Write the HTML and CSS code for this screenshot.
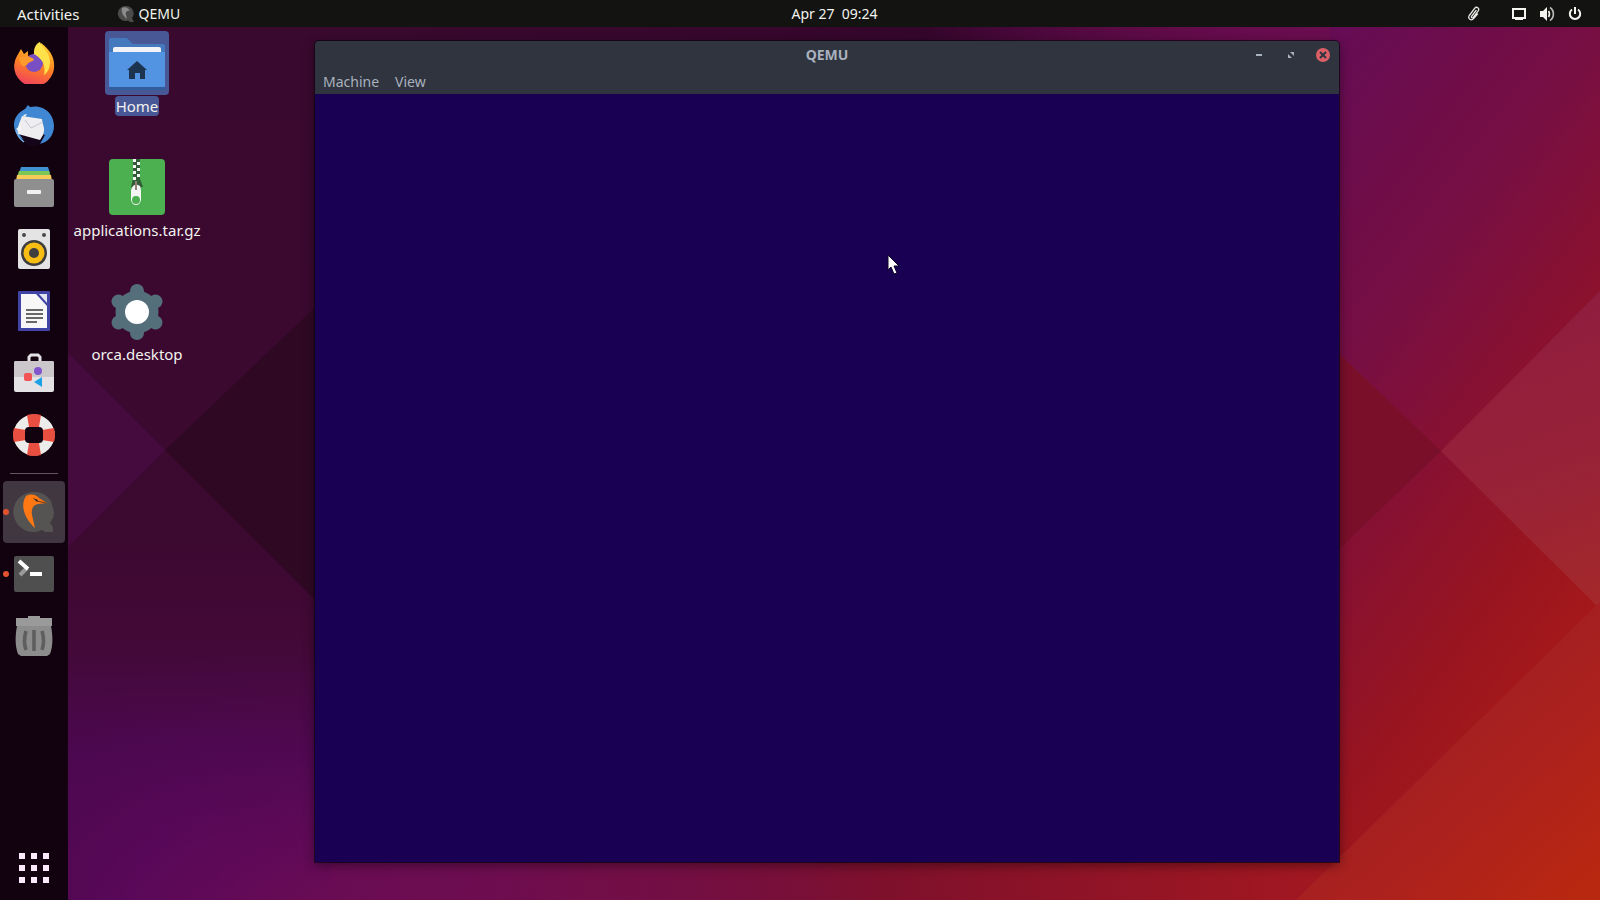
FILE: index.html
```
<!DOCTYPE html>
<html lang="en">
<head>
<meta charset="utf-8">
<title>Desktop</title>
<link rel="stylesheet" href="styles.css">
</head>
<body>
<svg class="wallpaper" viewBox="0 0 1600 900" preserveAspectRatio="none" aria-hidden="true">
  <defs>
    <linearGradient id="base" gradientUnits="userSpaceOnUse" x1="0" y1="0" x2="1600" y2="900">
      <stop offset="0" stop-color="#39092e"/><stop offset=".15" stop-color="#3a092f"/><stop offset=".22" stop-color="#48084a"/><stop offset=".3" stop-color="#5a0859"/>
      <stop offset=".4" stop-color="#6a0c54"/><stop offset=".52" stop-color="#700e4c"/><stop offset=".65" stop-color="#6a0d50"/><stop offset=".74" stop-color="#7a0f42"/>
      <stop offset=".8" stop-color="#88112f"/><stop offset=".88" stop-color="#9a151f"/><stop offset="1" stop-color="#b62410"/>
    </linearGradient>
    <linearGradient id="right" gradientUnits="userSpaceOnUse" x1="1340" y1="30" x2="1925" y2="463">
      <stop offset="0" stop-color="#660c55"/><stop offset=".15" stop-color="#6e0d4a"/><stop offset=".3" stop-color="#780f42"/><stop offset=".46" stop-color="#881131"/><stop offset=".64" stop-color="#99151f"/><stop offset=".75" stop-color="#a4181a"/><stop offset="1" stop-color="#b62410"/>
    </linearGradient>
    <linearGradient id="left" x1="0" y1="0" x2="0" y2="1">
      <stop offset="0" stop-color="#3a092e"/><stop offset=".6" stop-color="#3c0931"/><stop offset=".72" stop-color="#430938"/><stop offset=".84" stop-color="#4c0850" stop-opacity=".8"/><stop offset="1" stop-color="#5a085c" stop-opacity="0"/>
    </linearGradient>
    <linearGradient id="top" x1="0" y1="0" x2="1" y2="0">
      <stop offset="0" stop-color="#3a092e"/><stop offset=".6" stop-color="#35062c"/><stop offset="1" stop-color="#5c0850" stop-opacity="0"/>
    </linearGradient>
    <linearGradient id="bottom" x1="0" y1="0" x2="1" y2="0">
      <stop offset="0" stop-color="#750e42" stop-opacity="0"/><stop offset=".45" stop-color="#7e102c"/><stop offset="1" stop-color="#a41820"/>
    </linearGradient>
    <linearGradient id="diamond" gradientUnits="userSpaceOnUse" x1="1500" y1="330" x2="1600" y2="600">
      <stop offset="0" stop-color="#901d3e"/><stop offset=".5" stop-color="#972238"/><stop offset="1" stop-color="#a4282a"/>
    </linearGradient>
    <linearGradient id="corner" gradientUnits="userSpaceOnUse" x1="1450" y1="720" x2="1590" y2="880">
      <stop offset="0" stop-color="#a41f23"/><stop offset=".5" stop-color="#ae221b"/><stop offset="1" stop-color="#b82710"/>
    </linearGradient>
  </defs>
  <path fill="url(#base)" d="M0 0H1600V900H0z"/>
  <path fill="url(#right)" d="M1330 0H1600V900H1330z"/>
  <path fill="url(#left)" d="M0 0H330V900H0z"/>
  <path fill="url(#top)" d="M330 0H1330V60H330z"/>
  <path fill="url(#bottom)" d="M500 850H1340V900H500z"/>
  <path fill="#450a3e" d="M0 285L165 450L0 615z"/>
  <path fill="#2f0924" d="M165 450L330 293V615z"/>
  <path fill="#7a0f2a" d="M1330 345L1441 451L1330 558z"/>
  <path fill="url(#diamond)" d="M1600 291V609L1441 451z"/>
  <path fill="url(#corner)" d="M1600 602L1296 900H1600z"/>
</svg>

<header class="topbar">
  <div class="topbar-left">
    <button class="bar-button activities">Activities</button>
    <button class="bar-button app-menu">
      <svg width="18" height="18" viewBox="0 0 18 18"><path fill="#4b4b4b" d="M8 1a7.500 7.500 0 1 0 3 14.500l2 1.500h4l-2-4a7.500 7.500 0 0 0-7-12z"/><path fill="#8c8c8c" d="M5 3c3-2 6 0 8 3-3-1-5 1-4 4l1 4C6 11 4 7 5 3z"/></svg>
      <span>QEMU</span>
    </button>
  </div>
  <button class="bar-button clock">Apr 27&nbsp; 09:24</button>
  <div class="topbar-right">
    <button class="bar-button tray" aria-label="Clipboard">
      <svg width="16" height="16" viewBox="0 0 16 16" fill="none" stroke="#e8e8e4" stroke-width="1.300" stroke-linecap="round"><path d="M10 4.500L5.700 10.200c-.8 1.200.6 2.300 1.500 1.200l5-6.600c1.700-2.500-1.600-4.800-3.400-2.600L3.300 9.500c-2 3 2 6 4.300 3.200L11.500 8"/></svg>
    </button>
    <button class="bar-button system" aria-label="System menu">
      <svg width="16" height="16" viewBox="0 0 16 16"><path fill="#f4f4f0" fill-rule="evenodd" d="M1 2h14v11h-3v1H4v-1H1zM3 4v7h10V4z"/></svg>
      <svg width="16" height="16" viewBox="0 0 16 16"><path fill="#f4f4f0" d="M1 5h3l4-4v14l-4-4H1z"/><path fill="none" stroke="#f4f4f0" stroke-width="1.600" d="M9.500 5q2 3 0 6"/><path fill="none" stroke="#b9b9b5" stroke-width="1.700" d="M11 1.500c4.500 3 4.500 10 0 13"/></svg>
      <svg width="16" height="16" viewBox="0 0 16 16" fill="none" stroke="#f4f4f0" stroke-width="2"><path d="M5 3.500a5.200 5.200 0 1 0 6 0M8 1v7"/></svg>
    </button>
  </div>
</header>

<div class="workspace">
  <nav class="dock" aria-label="Dock">
    <button class="dock-item" aria-label="Firefox"><svg viewBox="0 0 40 42">
      <defs><linearGradient id="fox" x1=".7" y1="0" x2=".4" y2="1"><stop offset="0" stop-color="#ffcf35"/><stop offset=".5" stop-color="#ff8420"/><stop offset="1" stop-color="#f0405e"/></linearGradient></defs>
      <path fill="url(#fox)" d="M3 14L7 7l3 5 4-3v5l10-3 3-10c8 6 13 13 13 21A20 20 0 1 1 3 14z"/>
      <circle cx="20" cy="21" r="9" fill="#7b4fc4"/><path fill="#ffe14a" d="M20 10c0-5 3-9 6-10 2 6 10 10 10 20 0 7-3 11-6 13 2-9-1-16-10-21z"/>
      <path fill="#ff9a2c" d="M5 15l9-1c2 2 5 1 6 4-3 2-6 2-7 5-4 3-7 0-8-8z"/>
    </svg></button>
    <button class="dock-item" aria-label="Thunderbird"><svg viewBox="0 0 40 42">
      <path fill="#3f87d2" d="M11 5l3-4 2 2C30 0 40 10 40 22c0 9-6 17-15 18l-8-2C7 37 0 30 0 21 0 13 5 8 11 5z"/>
      <path fill="#14051a" d="M4 28l9 13c5 1 9 1 13-1l5-9-20-7z"/><path fill="#eeeef0" d="M8 12l20 3c0 5 4 9 1 16l-3 5L4 30c-2-5 2-12 4-18z"/>
      <path fill="none" stroke="#c3c7ce" d="M11 16l6 8 12-6"/><path fill="#f4f6fa" d="M9 11l4-1-2 3zM2 25l5-4v7z"/><path fill="none" stroke="#74b2ef" stroke-width="1.500" d="M2 26c1 6 4 9 8 12"/>
    </svg></button>
    <button class="dock-item" aria-label="Files"><svg viewBox="0 0 40 42">
      <path fill="#4190cf" d="M7 1h27l2 6H5z"/><path fill="#7cc655" d="M5 5h30l2 6H3z"/><path fill="#f6cb58" d="M3 9h34l1 6H2z"/><rect y="13" width="40" height="28" rx="2" fill="#8f8f8f"/><rect x="13" y="24" width="14" height="4" rx="1" fill="#f2f2f2"/>
    </svg></button>
    <button class="dock-item" aria-label="Rhythmbox"><svg viewBox="0 0 40 42">
      <rect x="4" y="1" width="32" height="40" rx="2" fill="#e4e4e4"/><circle cx="10" cy="7" r="2" fill="#4a4a4a"/><circle cx="30" cy="7" r="2" fill="#4a4a4a"/><circle cx="20" cy="25" r="13" fill="#3e3e3e"/><circle cx="20" cy="25" r="10.500" fill="#f8bd13"/><circle cx="20" cy="25" r="5" fill="#3e3e3e"/>
    </svg></button>
    <button class="dock-item" aria-label="LibreOffice Writer"><svg viewBox="0 0 40 42">
      <rect x="4" y="1" width="32" height="40" rx="1" fill="#4044a4"/><path fill="#f7f7f7" d="M7 4h15l11 12v22H7z"/><path fill="#e2e6f0" d="M25 4h8v9z"/><path stroke="#686868" stroke-width="2" d="M12 20h17M12 24h17M12 28h17M12 32h11"/>
    </svg></button>
    <button class="dock-item" aria-label="Ubuntu Software"><svg viewBox="0 0 40 42">
      <path fill="none" stroke="#e4e2e4" stroke-width="3" d="M15 10V5l2-2h7l2 2v5"/><rect y="9" width="40" height="31" rx="2" fill="#e4e2e4"/><path fill="#cbc7cb" d="M0 11q0-2 2-2h36q2 0 2 2v14H0z"/><circle cx="24" cy="19" r="4" fill="#8255cf"/><rect x="10" y="21" width="8" height="8" rx="2" fill="#f25455"/><path fill="#1ca2e4" d="M20 30l8-5v10z"/>
    </svg></button>
    <button class="dock-item" aria-label="Help"><svg viewBox="0 0 42 42">
      <circle cx="21" cy="21" r="14.500" fill="none" stroke="#ececea" stroke-width="12"/><path fill="#e94f40" d="M14 1q7-2 14 0l-2 12H16zM14 41q7 2 14 0l-2-12H16zM1 14q-2 7 0 14l12-2V16zM41 14q2 7 0 14l-12-2V16z"/><rect x="12" y="13" width="18" height="16" rx="4" fill="#12010f"/>
    </svg></button>
    <hr class="dock-separator">
    <button class="dock-item running active" aria-label="QEMU"><svg viewBox="0 0 40 42">
      <path fill="#555452" d="M20 1a20 20 0 1 0 8 38l3 2h8v-5l-3-4 3-5 1-6-3-11A20 20 0 0 0 20 1z"/><path fill="#ff7813" d="M12 5c6-3 10-1 13 2l8 5-9 1c-5 1-7 5-6 11l3 13C10 27 6 14 12 5z"/><path fill="#2b2421" d="M19 7l5 2-1 2z"/><path stroke="#6b391a" d="M23 10l9 2"/>
    </svg></button>
    <button class="dock-item running" aria-label="Terminal"><svg viewBox="0 0 40 42">
      <rect y="3" width="40" height="36" rx="2" fill="#504f50"/><path fill="none" stroke="#9a9a9a" stroke-width="4" d="M13 15l-7 7"/><path fill="none" stroke="#fff" stroke-width="4" d="M5 8l9 8M16 21h12"/>
    </svg></button>
    <button class="dock-item" aria-label="Trash"><svg viewBox="0 0 40 42">
      <path fill="#9a9a9a" d="M14 1h12v2h12v8H2V3h12z"/><path fill="#8c8c8c" d="M3 11h34c2 10 2 20-1 28l-3 2H7l-3-2C1 31 1 21 3 11z"/><path fill="none" stroke="#5e5e5e" stroke-width="3.600" d="M12 16q-3 10 0 19M20 15v21M28 16q3 10 0 19"/>
    </svg></button>
    <button class="dock-item apps" aria-label="Show Applications"><svg viewBox="0 0 42 42"><path fill="#fce9fb" d="M6 6h6v6H6zM18 6h6v6h-6zM30 6h6v6h-6zM6 18h6v6H6zM18 18h6v6h-6zM30 18h6v6h-6zM6 30h6v6H6zM18 30h6v6h-6zM30 30h6v6h-6z"/></svg></button>
  </nav>

  <main class="desktop">
    <div class="shortcuts">
      <button class="shortcut selected">
        <span class="shortcut-icon"><svg viewBox="0 0 64 64"><path fill="#4579bd" d="M4 9q0-2 2-2h14c5 0 5 6 9 6h29q2 0 2 2v40H4z"/><path fill="#f1f3f6" d="M8 18q0-2 2-2h44q2 0 2 2v8H8z"/><path fill="#5294e2" d="M4 21h56v34q0 2-2 2H6q-2 0-2-2z"/><path fill="#325d9c" d="M4 56h56v1q0 2-2 2H6q-2 0-2-2z"/><path fill="#1d3450" d="M32 30l10 9h-2v9h-5v-6h-5v6h-6v-9h-2z"/></svg></span>
        <span class="shortcut-name">Home</span>
      </button>
      <button class="shortcut">
        <span class="shortcut-icon"><svg viewBox="0 0 64 64"><rect x="4" y="4" width="56" height="56" rx="4" fill="#4caf50"/><path fill="#315c37" d="M28 4h7v20l3 8H26l2-8z"/><path fill="#f5f7f5" d="M28 4h3v3h-3zM32 7h3v3h-3zM28 10h3v3h-3zM32 13h3v3h-3zM28 16h3v3h-3zM32 19h3v3h-3zM28 22h3v3h-3z"/><path fill="#f5f5f5" d="M28 31q3-3 7 0l1 4v10q-1 5-5 5t-5-5V35z"/><path stroke="#938078" stroke-width="2" d="M31 26v9"/><circle cx="31" cy="45" r="4" fill="#4caf50"/></svg></span>
        <span class="shortcut-name">applications.tar.gz</span>
      </button>
      <button class="shortcut">
        <span class="shortcut-icon"><svg viewBox="0 0 64 64"><g stroke="#546e7a" stroke-width="14" stroke-linecap="round"><path d="M32 12v42M13.500 22.500l37 21M50.500 22.500l-37 21"/></g><circle cx="32" cy="33" r="21.500" fill="#546e7a"/><circle cx="32" cy="33" r="12" fill="#fff"/></svg></span>
        <span class="shortcut-name">orca.desktop</span>
      </button>
    </div>

    <section class="window" aria-label="QEMU">
      <div class="titlebar">
        <h1 class="title">QEMU</h1>
        <div class="controls">
          <button class="control" aria-label="Minimize"><svg viewBox="0 0 14 14"><path fill="#a9b1be" d="M4 6h6v2H4z"/></svg></button>
          <button class="control" aria-label="Maximize"><svg viewBox="0 0 14 14"><path fill="#a9b1be" d="M6 4h4v4zM4 6l4 4H4z"/></svg></button>
          <button class="control close" aria-label="Close"><svg viewBox="0 0 14 14"><path stroke="#2f343f" stroke-width="2" d="M4 4l6 6M10 4l-6 6"/></svg></button>
        </div>
      </div>
      <div class="menubar"><button class="menu">Machine</button><button class="menu">View</button></div>
      <div class="screen"></div>
    </section>
  </main>
</div>
<svg class="cursor" viewBox="0 0 14 22" aria-hidden="true"><path fill="#fff" stroke="#0b0524" d="M1 1v15l3-3 3 7 3-1-3-7h5z"/></svg>
</body>
</html>
```
FILE: styles.css
```
* { box-sizing: border-box; }

body {
  margin: 0;
  height: 100vh;
  overflow: hidden;
  display: flex;
  flex-direction: column;
  position: relative;
  background: #3a092e;
  color: #f2f2ee;
  font: 14px/20px "Noto Sans", "Open Sans", sans-serif;
}

button {
  margin: 0;
  padding: 0;
  border: 0;
  background: none;
  color: inherit;
  font: inherit;
}

svg { display: block; }

.wallpaper {
  position: absolute;
  inset: 0;
  width: 100%;
  height: 100%;
}

.topbar {
  position: relative;
  flex: none;
  display: grid;
  grid-template-columns: 1fr auto 1fr;
  align-items: center;
  height: 27px;
  padding: 0 17px;
  background: #131412;
}

.topbar-left,
.topbar-right,
.app-menu,
.system {
  display: flex;
  align-items: center;
}

.topbar-left { gap: 37px; }
.topbar-right { justify-content: flex-end; gap: 29px; }
.activities { font-size: 15px; }
.app-menu { gap: 4px; }
.system { gap: 12px; }
.clock { padding-left: 69px; }

.workspace {
  position: relative;
  flex: 1;
  min-height: 0;
  display: flex;
}

.dock {
  flex: none;
  width: 68px;
  display: flex;
  flex-direction: column;
  align-items: center;
  padding: 5px 0 1px;
  background: #12010f;
}

.dock-item {
  position: relative;
  flex: none;
  width: 62px;
  height: 62px;
  display: grid;
  place-items: center;
  border-radius: 4px;
}

.dock-item svg { width: 42px; height: 42px; }
.dock-item.active { background: #403741; }

.running::before {
  content: "";
  position: absolute;
  left: 0;
  top: 28px;
  width: 6px;
  height: 6px;
  border-radius: 50%;
  background: #e1532e;
}

.dock-separator {
  width: 48px;
  height: 1px;
  margin: 7px 0;
  border: 0;
  background: #625463;
}

.apps { margin-top: auto; }

.desktop {
  position: relative;
  flex: 1;
  padding: 4px 6px;
}

.shortcuts {
  display: flex;
  flex-direction: column;
  align-items: flex-start;
}

.shortcut {
  width: 126px;
  height: 124px;
  display: flex;
  flex-direction: column;
  align-items: center;
  gap: 1px;
  white-space: nowrap;
  font-size: 15px;
}

.shortcut-icon { width: 64px; height: 64px; border-radius: 4px; }
.shortcut-name { padding: 0 1px; border-radius: 4px; line-height: 20px; }
.selected .shortcut-icon,
.selected .shortcut-name { background: #485795; }

.window {
  position: absolute;
  left: 247px;
  right: 261px;
  top: 14px;
  bottom: 38px;
  display: flex;
  flex-direction: column;
  border-radius: 4px 4px 0 0;
  background: #2f343f;
  color: #a9b1be;
  box-shadow: 0 0 0 1px rgba(10, 5, 20, .7), 0 3px 12px rgba(0, 0, 0, .45);
}

.titlebar {
  display: grid;
  grid-template-columns: 1fr auto 1fr;
  align-items: center;
  height: 28px;
  padding: 0 9px;
}

.title {
  grid-column: 2;
  margin: 0;
  font-size: 14px;
  line-height: 20px;
}

.controls { display: flex; justify-content: flex-end; gap: 18px; }
.control { width: 14px; height: 14px; border-radius: 50%; }
.close { background: #dc5f68; }

.menubar {
  display: flex;
  gap: 16px;
  height: 25px;
  padding: 0 8px;
}

.screen { flex: 1; background: #190053; }

.cursor {
  position: absolute;
  left: 887px;
  top: 254px;
  width: 14px;
  height: 22px;
}
```
